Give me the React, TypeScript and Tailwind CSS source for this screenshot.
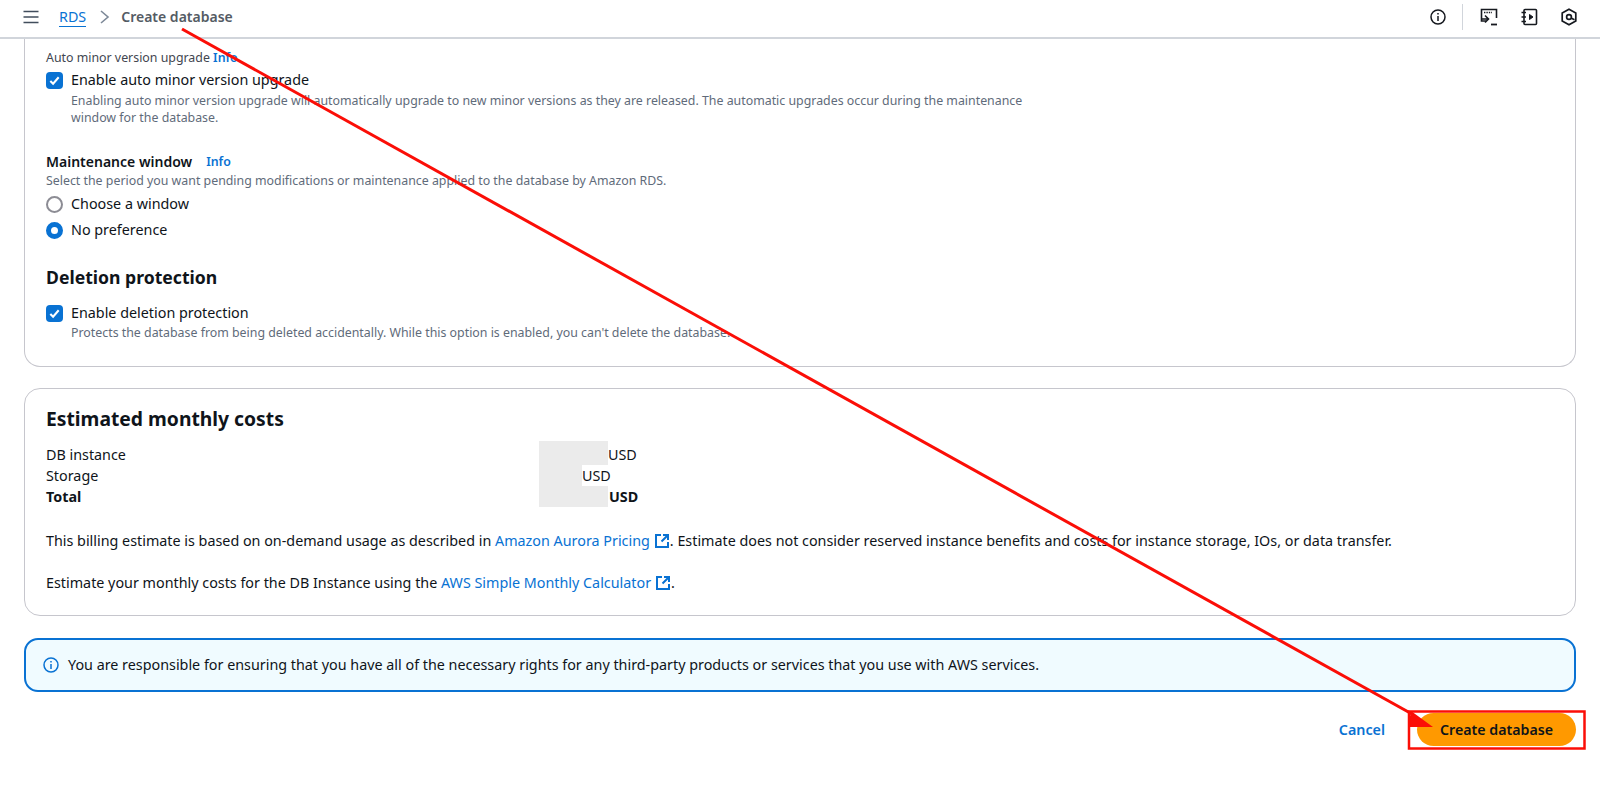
const ExternalIcon = () => (
  <svg viewBox="0 0 16 16" className="inline-block w-[16px] h-[16px] ml-[4px] align-[-3px]" fill="none" stroke="#0972d3" strokeWidth="2">
    <path d="M14 9v5H2V2h5" />
    <path d="M9 2h5v5M14 2L7.5 8.5" />
  </svg>
);

const Check = () => (
  <span className="w-[17px] h-[17px] rounded-[4px] bg-[#0972d3] flex items-center justify-center shrink-0">
    <svg viewBox="0 0 14 14" className="w-[13px] h-[13px]" fill="none" stroke="#fff" strokeWidth="2.2">
      <path d="M2.5 7.5L5.5 10.5L11.5 3.5" />
    </svg>
  </span>
);

export default function App() {
  return (
    <div className="relative h-[786px] w-[1600px] overflow-hidden bg-white text-[14.33px] leading-[20px] text-[#0f141a] font-['Noto_Sans',sans-serif]">
      <header className="h-[39px] border-b-2 border-[#d1d5db] flex items-center pl-[23px] pr-[22px] pb-[3px]">
        <svg viewBox="0 0 16 16" className="w-[16px] h-[16px]" fill="none" stroke="#414d5c" strokeWidth="1.6">
          <path d="M0.5 2.5h15M0.5 8h15M0.5 13.5h15" />
        </svg>
        <a className="ml-[20px] text-[#0972d3] border-b border-[#0972d3] leading-[19px]">RDS</a>
        <svg viewBox="0 0 12 16" className="w-[12px] h-[16px] ml-[13px]" fill="none" stroke="#7d8998" strokeWidth="1.6">
          <path d="M2 2l7 6-7 6" />
        </svg>
        <span className="ml-[10px] text-[14px] font-semibold text-[#545b64]">Create database</span>
        <div className="ml-auto flex items-center">
          <svg viewBox="0 0 16 16" className="w-[16px] h-[16px]" fill="none" stroke="#16191f" strokeWidth="1.5">
            <circle cx="8" cy="8" r="7" />
            <path d="M8 7v5M8 4v1.6" />
          </svg>
          <span className="w-[1px] h-[26px] bg-[#d1d5db] ml-[16px] mr-[17px]" />
          <svg viewBox="0 0 18 18" className="w-[18px] h-[18px]" fill="none" stroke="#16191f" strokeWidth="1.6">
            <path d="M6 13H1.5V1.5h15V10" />
            <path d="M4 4.5h8" strokeDasharray="1.4 1" />
            <path d="M5 7.5l3.5 3.5L5 14.5M1 11h7" />
            <path d="M11 16.5h6" strokeWidth="1.8" />
          </svg>
          <svg viewBox="0 0 18 18" className="w-[18px] h-[18px] ml-[22px]" fill="none" stroke="#16191f" strokeWidth="1.6">
            <rect x="4" y="1.5" width="12.5" height="15" rx="1" />
            <path d="M1.5 4.5H6M1.5 9H6M1.5 13.5H6" />
            <path d="M9.5 6.5l3.5 2.5-3.5 2.5z" fill="#16191f" strokeWidth="1" />
          </svg>
          <svg viewBox="0 0 18 18" className="w-[18px] h-[18px] ml-[22px]" fill="none" stroke="#16191f" strokeWidth="1.7">
            <path d="M9 1.2l6.8 3.9v7.8L9 16.8l-6.8-3.9V5.1z" />
            <circle cx="9" cy="9" r="2.4" />
            <path d="M11 10l3.5 1.8" />
          </svg>
        </div>
      </header>

      <main className="px-[24px]">
        <section className="h-[328px] border border-t-0 border-[#c6c6cd] rounded-b-[16px] pl-[21px] pt-[10px]">
          <div className="text-[12.36px] leading-[17px] text-[#424650]">
            Auto minor version upgrade <a className="font-semibold text-[#0972d3]">Info</a>
          </div>
          <div className="flex gap-[8px] mt-[4px]">
            <span className="pt-[2px]"><Check /></span>
            <div className="w-[960px]">
              <div>Enable auto minor version upgrade</div>
              <p className="mt-[2px] text-[12.36px] leading-[17px] text-[#5f6b7a]">
                Enabling auto minor version upgrade will automatically upgrade to new minor versions as they are released. The automatic upgrades occur during the maintenance window for the database.
              </p>
            </div>
          </div>

          <div className="mt-[26px] flex items-center font-semibold">
            <span className="text-[14px]">Maintenance window</span>
            <a className="ml-[14px] text-[12.36px] font-semibold text-[#0972d3]">Info</a>
          </div>
          <p className="text-[12.36px] leading-[17px] text-[#5f6b7a]">Select the period you want pending modifications or maintenance applied to the database by Amazon RDS.</p>
          <div className="flex items-center gap-[8px] mt-[5px]">
            <span className="w-[17px] h-[17px] rounded-full border-2 border-[#8c8c94]" />
            <span>Choose a window</span>
          </div>
          <div className="flex items-center gap-[8px] mt-[6px]">
            <span className="w-[17px] h-[17px] rounded-full border-[5px] border-[#0972d3] bg-white" />
            <span>No preference</span>
          </div>

          <h2 className="mt-[25px] text-[17.6px] leading-[24px] font-bold">Deletion protection</h2>
          <div className="flex gap-[8px] mt-[14px]">
            <span className="pt-[2px]"><Check /></span>
            <div>
              <div>Enable deletion protection</div>
              <p className="mt-[1px] text-[12.36px] leading-[17px] text-[#5f6b7a]">Protects the database from being deleted accidentally. While this option is enabled, you can't delete the database.</p>
            </div>
          </div>
        </section>

        <section className="mt-[21px] h-[228px] border border-[#c6c6cd] rounded-[16px] pl-[21px] pt-[18px]">
          <h2 className="text-[19.3px] leading-[24px] font-bold">Estimated monthly costs</h2>
          <div className="mt-[13px]">
            <div className="flex h-[21px] items-center">
              <span className="w-[493px] pt-[1px]">DB instance</span>
              <span className="w-[69px] h-full bg-[#ebebeb] -mt-[3px] pt-[3px] box-content" />
              <span className="pt-[1px]">USD</span>
            </div>
            <div className="flex h-[21px] items-center">
              <span className="w-[493px] pt-[1px]">Storage</span>
              <span className="w-[43px] h-full bg-[#ebebeb]" />
              <span className="pt-[1px]">USD</span>
            </div>
            <div className="flex h-[21px] items-center font-bold">
              <span className="w-[493px] pt-[1px]">Total</span>
              <span className="w-[69px] h-full bg-[#ebebeb]" />
              <span className="ml-[1px] pt-[1px]">USD</span>
            </div>
          </div>
          <p className="mt-[24px]">
            This billing estimate is based on on-demand usage as described in <a className="text-[#0972d3]">Amazon Aurora Pricing<ExternalIcon /></a>. Estimate does not consider reserved instance benefits and costs for instance storage, IOs, or data transfer.
          </p>
          <p className="mt-[22px]">
            Estimate your monthly costs for the DB Instance using the <a className="text-[#0972d3]">AWS Simple Monthly Calculator<ExternalIcon /></a>.
          </p>
        </section>

        <section className="mt-[22px] h-[54px] border-2 border-[#0972d3] rounded-[14px] bg-[#f0fbff] flex items-center pl-[17px] gap-[9px]">
          <svg viewBox="0 0 16 16" className="w-[16px] h-[16px]" fill="none" stroke="#0972d3" strokeWidth="1.5">
            <circle cx="8" cy="8" r="7" />
            <path d="M8 7v5M8 4v1.6" />
          </svg>
          <span>You are responsible for ensuring that you have all of the necessary rights for any third-party products or services that you use with AWS services.</span>
        </section>

        <div className="mt-[21px] flex justify-end items-center">
          <a className="font-semibold text-[14.3px] text-[#0972d3] mr-[32px]">Cancel</a>
          <button className="h-[33px] w-[159px] rounded-full bg-[#ff9900] text-[14.2px] font-semibold text-[#0f141a]">Create database</button>
        </div>
      </main>

      <svg className="absolute inset-0 pointer-events-none" width="1600" height="786" viewBox="0 0 1600 786">
        <path d="M182 29L1412 714" stroke="#fb0e07" strokeWidth="3" fill="none" />
        <path d="M1433 727L1408 727L1411 711z" fill="#fb0e07" />
        <rect x="1409" y="711.5" width="175.5" height="37" stroke="#fb0e07" strokeWidth="2.5" fill="none" />
      </svg>
    </div>
  );
}
